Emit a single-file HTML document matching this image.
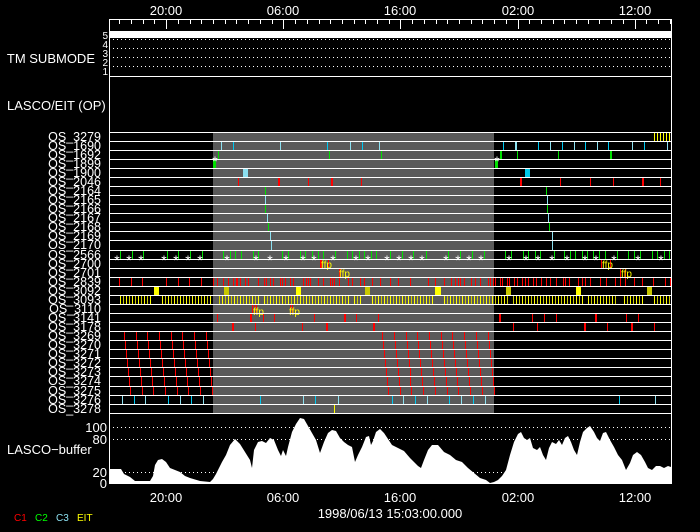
<!DOCTYPE html>
<html><head><meta charset="utf-8"><style>
html,body{margin:0;padding:0;background:#000;}
svg{display:block;}
text{font-family:"Liberation Sans",sans-serif;fill:#fff;}
text.y{fill:#ffff00;}
</style></head><body>
<svg width="700" height="532" viewBox="0 0 700 532" xmlns="http://www.w3.org/2000/svg">
<defs>
<pattern id="yp" x="0" y="0" width="6" height="10" patternUnits="userSpaceOnUse">
<rect x="0" y="0" width="1" height="10" fill="#ffff00"/><rect x="3" y="0" width="1" height="10" fill="#d0d000"/>
</pattern>
</defs>
<rect width="700" height="532" fill="#000"/>
<text x="166" y="15" font-size="13" text-anchor="middle">20:00</text>
<text x="283" y="15" font-size="13" text-anchor="middle">06:00</text>
<text x="400" y="15" font-size="13" text-anchor="middle">16:00</text>
<text x="518" y="15" font-size="13" text-anchor="middle">02:00</text>
<text x="635" y="15" font-size="13" text-anchor="middle">12:00</text>
<g stroke="#fff" stroke-width="1" shape-rendering="crispEdges">
<path d="M109 19.5H671.5"/>
<path d="M109.5 19V484M671.5 19V484"/>
<path d="M119.5 19v5M131.5 19v5M143.5 19v5M154.5 19v5M166.5 19v10M178.5 19v5M190.5 19v5M201.5 19v5M213.5 19v5M225.5 19v5M236.5 19v5M248.5 19v5M260.5 19v5M272.5 19v5M283.5 19v10M295.5 19v5M307.5 19v5M319.5 19v5M330.5 19v5M342.5 19v5M354.5 19v5M365.5 19v5M377.5 19v5M389.5 19v5M400.5 19v10M412.5 19v5M424.5 19v5M436.5 19v5M447.5 19v5M459.5 19v5M471.5 19v5M482.5 19v5M494.5 19v5M506.5 19v5M518.5 19v10M529.5 19v5M541.5 19v5M553.5 19v5M564.5 19v5M576.5 19v5M588.5 19v5M599.5 19v5M611.5 19v5M623.5 19v5M635.5 19v10M646.5 19v5M658.5 19v5M670.5 19v5"/>
</g>
<rect x="109" y="31" width="563" height="7" fill="#fff"/>
<g stroke="#fff" stroke-width="1" stroke-dasharray="1 3" shape-rendering="crispEdges">
<path d="M113 39.5H670M113 48.5H670M113 57.5H670M113 66.5H670"/>
</g>
<path d="M109 76.5H672" stroke="#fff" shape-rendering="crispEdges"/>
<text x="95" y="63" font-size="13" text-anchor="end">TM SUBMODE</text>
<g font-size="10" text-anchor="end">
<text x="108" y="39">5</text><text x="108" y="48">4</text><text x="108" y="57">3</text><text x="108" y="66">2</text><text x="108" y="75">1</text>
</g>
<text x="7" y="110" font-size="13">LASCO/EIT (OP)</text>
<rect x="213" y="132" width="281" height="281" fill="#5a5a5a"/>
<g shape-rendering="crispEdges" stroke-width="1" fill="none">
<path stroke="#ffff00" d="M654.5 133v8M657.5 133v8M660.5 133v8M663.5 133v8M666.5 133v8M669.5 133v8"/>
<path stroke="#8ce0f0" d="M221.5 142v8M280.5 142v8M350.5 142v8M379.5 142v8M515.5 142v8M516.5 142v8M550.5 142v8M574.5 142v8M597.5 142v8M632.5 142v8M667.5 142v8"/>
<path stroke="#00c8f0" d="M233.5 142v8M327.5 142v8M362.5 142v8M503.5 142v8M538.5 142v8M562.5 142v8M585.5 142v8M608.5 142v8M644.5 142v8"/>
<path stroke="#00e000" d="M218.5 151v8M329.5 151v8M381.5 151v8M500.5 151v8M501.5 151v8M517.5 151v8M558.5 151v8M610.5 151v8M611.5 151v8"/>
<path stroke="#ff0000" d="M238.5 178v8M278.5 178v8M279.5 178v8M308.5 178v8M331.5 178v8M332.5 178v8M361.5 178v8M520.5 178v8M521.5 178v8M560.5 178v8M590.5 178v8M613.5 178v8M642.5 178v8M643.5 178v8M660.5 178v8"/>
<path stroke="#00e000" d="M265.5 187v8M265.5 205v8M268.5 223v8M546.5 187v8M547.5 205v8M549.5 223v8"/>
<path stroke="#8ce0f0" d="M265.5 196v8M267.5 214v8M270.5 232v8M271.5 241v9M547.5 196v8M548.5 214v8M552.5 232v8M552.5 241v9"/>
<path stroke="#00e000" d="M120.5 251v8M132.5 251v8M143.5 251v8M167.5 251v8M178.5 251v8M190.5 251v8M202.5 251v8M223.5 251v8M230.5 251v8M235.5 251v8M241.5 251v8M253.5 251v8M258.5 251v8M282.5 251v8M288.5 251v8M300.5 251v8M305.5 251v8M312.5 251v8M318.5 251v8M323.5 251v8M335.5 251v8M347.5 251v8M352.5 251v8M359.5 251v8M364.5 251v8M371.5 251v8M376.5 251v8M390.5 251v8M402.5 251v8M413.5 251v8M426.5 251v8M448.5 251v8M460.5 251v8M472.5 251v8M484.5 251v8M505.5 251v8M511.5 251v8M523.5 251v8M528.5 251v8M535.5 251v8M540.5 251v8M554.5 251v8M564.5 251v8M570.5 251v8M575.5 251v8M582.5 251v8M587.5 251v8M593.5 251v8M599.5 251v8M605.5 251v8M617.5 251v8M628.5 251v8M634.5 251v8M640.5 251v8M652.5 251v8M657.5 251v8M664.5 251v8M669.5 251v8"/>
<path stroke="#ff0000" d="M320.5 260v8M321.5 260v8M328.5 260v8M339.5 269v8M340.5 269v8M601.5 260v8M610.5 260v8M620.5 269v8M625.5 269v8"/>
<path stroke="#ff0000" d="M119.5 278v8M131.5 278v8M142.5 278v8M166.5 278v8M178.5 278v8M189.5 278v8M201.5 278v8M213.5 278v8M217.5 278v8M223.5 278v8M228.5 278v8M233.5 278v8M236.5 278v8M237.5 278v8M240.5 278v8M245.5 278v8M248.5 278v8M258.5 278v8M264.5 278v8M266.5 278v8M270.5 278v8M273.5 278v8M280.5 278v8M282.5 278v8M285.5 278v8M290.5 278v8M293.5 278v8M303.5 278v8M306.5 278v8M308.5 278v8M310.5 278v8M318.5 278v8M323.5 278v8M330.5 278v8M332.5 278v8M334.5 278v8M339.5 278v8M348.5 278v8M352.5 278v8M360.5 278v8M364.5 278v8M372.5 278v8M380.5 278v8M390.5 278v8M398.5 278v8M410.5 278v8M428.5 278v8M435.5 278v8M444.5 278v8M451.5 278v8M455.5 278v8M458.5 278v8M460.5 278v8M464.5 278v8M471.5 278v8M475.5 278v8M480.5 278v8M488.5 278v8M490.5 278v8M493.5 278v8M495.5 278v8M500.5 278v8M502.5 278v8M507.5 278v8M509.5 278v8M514.5 278v8M517.5 278v8M522.5 278v8M525.5 278v8M528.5 278v8M533.5 278v8M536.5 278v8M541.5 278v8M546.5 278v8M550.5 278v8M556.5 278v8M563.5 278v8M565.5 278v8M569.5 278v8M578.5 278v8M582.5 278v8M585.5 278v8M590.5 278v8M600.5 278v8M606.5 278v8M615.5 278v8M620.5 278v8M625.5 278v8M634.5 278v8M642.5 278v8M653.5 278v8M665.5 278v8M670.5 278v8"/>
<path stroke="#ff0000" d="M252.5 305v8M254.5 305v8M256.5 305v8M290.5 305v8M292.5 305v8"/>
<path stroke="#ff0000" d="M217.5 314v8M250.5 314v8M251.5 314v8M263.5 314v8M274.5 314v8M314.5 314v8M344.5 314v8M345.5 314v8M356.5 314v8M378.5 314v8M499.5 314v8M500.5 314v8M532.5 314v8M544.5 314v8M556.5 314v8M595.5 314v8M596.5 314v8M626.5 314v8M638.5 314v8"/>
<path stroke="#ff0000" d="M232.5 323v8M233.5 323v8M255.5 323v8M302.5 323v8M326.5 323v8M327.5 323v8M373.5 323v8M374.5 323v8M513.5 323v8M537.5 323v8M584.5 323v8M585.5 323v8M607.5 323v8M631.5 323v8M632.5 323v8M654.5 323v8"/>
<path stroke="#ff0000" d="M124.5 332v8M136.5 332v8M147.5 332v8M159.5 332v8M171.5 332v8M182.5 332v8M194.5 332v8M206.5 332v8M382.5 332v8M394.5 332v8M406.5 332v8M417.5 332v8M429.5 332v8M441.5 332v8M452.5 332v8M464.5 332v8M476.5 332v8M488.5 332v8
M125.5 341v8M137.5 341v8M148.5 341v8M160.5 341v8M172.5 341v8M183.5 341v8M195.5 341v8M207.5 341v8M383.5 341v8M395.5 341v8M407.5 341v8M418.5 341v8M430.5 341v8M442.5 341v8M453.5 341v8M465.5 341v8M477.5 341v8M489.5 341v8
M126.5 350v8M138.5 350v8M149.5 350v8M161.5 350v8M173.5 350v8M184.5 350v8M196.5 350v8M208.5 350v8M384.5 350v8M396.5 350v8M408.5 350v8M419.5 350v8M431.5 350v8M443.5 350v8M454.5 350v8M466.5 350v8M478.5 350v8M490.5 350v8
M127.5 359v8M139.5 359v8M150.5 359v8M162.5 359v8M174.5 359v8M185.5 359v8M197.5 359v8M209.5 359v8M385.5 359v8M397.5 359v8M409.5 359v8M420.5 359v8M432.5 359v8M444.5 359v8M455.5 359v8M467.5 359v8M479.5 359v8M491.5 359v8
M128.5 368v8M140.5 368v8M151.5 368v8M163.5 368v8M175.5 368v8M186.5 368v8M198.5 368v8M210.5 368v8M386.5 368v8M398.5 368v8M410.5 368v8M421.5 368v8M433.5 368v8M445.5 368v8M456.5 368v8M468.5 368v8M480.5 368v8M492.5 368v8
M129.5 377v9M141.5 377v9M152.5 377v9M164.5 377v9M176.5 377v9M187.5 377v9M199.5 377v9M211.5 377v9M387.5 377v9M399.5 377v9M410.5 377v9M422.5 377v9M434.5 377v9M446.5 377v9M457.5 377v9M469.5 377v9M481.5 377v9M493.5 377v9
M130.5 387v8M142.5 387v8M153.5 387v8M165.5 387v8M177.5 387v8M188.5 387v8M200.5 387v8M212.5 387v8M388.5 387v8M400.5 387v8M411.5 387v8M423.5 387v8M435.5 387v8M447.5 387v8M458.5 387v8M470.5 387v8M482.5 387v8M494.5 387v8"/>
<path stroke="#00c8f0" d="M134.5 396v8M168.5 396v8M191.5 396v8M260.5 396v8M315.5 396v8M392.5 396v8M415.5 396v8M449.5 396v8M473.5 396v8M619.5 396v8"/>
<path stroke="#8ce0f0" d="M122.5 396v8M145.5 396v8M180.5 396v8M203.5 396v8M303.5 396v8M338.5 396v8M403.5 396v8M427.5 396v8M461.5 396v8M485.5 396v8M655.5 396v8"/>
<path stroke="#ffff00" d="M334.5 405v8"/>
</g>
<g shape-rendering="crispEdges">
<rect x="213" y="160" width="3" height="8" fill="#00e000"/>
<rect x="495" y="160" width="3" height="8" fill="#00e000"/>
<rect x="243" y="169" width="5" height="8" fill="#8ce0f0"/>
<rect x="525" y="169" width="5" height="8" fill="#00c8e8"/>
<rect x="154" y="287" width="5" height="8" fill="#ffff00"/>
<rect x="224" y="287" width="5" height="8" fill="#c8c800"/>
<rect x="296" y="287" width="5" height="8" fill="#ffff00"/>
<rect x="365" y="287" width="5" height="8" fill="#c8c800"/>
<rect x="435" y="287" width="6" height="8" fill="#ffff00"/>
<rect x="506" y="287" width="5" height="8" fill="#c8c800"/>
<rect x="576" y="287" width="5" height="8" fill="#ffff00"/>
<rect x="647" y="287" width="5" height="8" fill="#c8c800"/>
<g fill="url(#yp)">
<rect x="119" y="296" width="33" height="8"/><rect x="161" y="296" width="51" height="8"/>
<rect x="217" y="296" width="43" height="8"/><rect x="262" y="296" width="88" height="8"/>
<rect x="352" y="296" width="11" height="8"/><rect x="372" y="296" width="63" height="8"/>
<rect x="444" y="296" width="64" height="8"/><rect x="513" y="296" width="70" height="8"/>
<rect x="588" y="296" width="30" height="8"/><rect x="624" y="296" width="21" height="8"/>
<rect x="652" y="296" width="18" height="8"/>
</g>
</g>
<g font-size="14" text-anchor="middle">
<text x="117" y="265">*</text><text x="129" y="265">*</text><text x="141" y="265">*</text><text x="164" y="265">*</text><text x="176" y="265">*</text><text x="188" y="265">*</text><text x="200" y="265">*</text><text x="227" y="265">*</text><text x="256" y="265">*</text><text x="270" y="265">*</text><text x="286" y="265">*</text><text x="303" y="265">*</text><text x="314" y="265">*</text><text x="333" y="265">*</text>
<text x="356" y="265">*</text><text x="368" y="265">*</text><text x="387" y="265">*</text><text x="399" y="265">*</text><text x="411" y="265">*</text><text x="422" y="265">*</text><text x="446" y="265">*</text><text x="458" y="265">*</text><text x="469" y="265">*</text><text x="481" y="265">*</text><text x="509" y="265">*</text><text x="526" y="265">*</text><text x="538" y="265">*</text><text x="552" y="265">*</text><text x="567" y="265">*</text><text x="585" y="265">*</text><text x="596" y="265">*</text><text x="614" y="265">*</text><text x="638" y="265">*</text><text x="661" y="265">*</text>
<text x="215" y="166">*</text><text x="497" y="166">*</text>
</g>
<g font-size="10">
<text class="y" x="321" y="268">ffp</text><text class="y" x="339" y="277">ffp</text>
<text class="y" x="602" y="268">ffp</text><text class="y" x="621" y="277">ffp</text>
<text class="y" x="253" y="315">ffp</text><text class="y" x="289" y="315">ffp</text>
</g>
<path stroke="#fff" stroke-width="1" shape-rendering="crispEdges" d="M109 132.5H671M109 141.5H671M109 150.5H671M109 159.5H671M109 168.5H671M109 177.5H671M109 186.5H671M109 195.5H671M109 204.5H671M109 213.5H671M109 222.5H671M109 231.5H671M109 240.5H671M109 250.5H671M109 259.5H671M109 268.5H671M109 277.5H671M109 286.5H671M109 295.5H671M109 304.5H671M109 313.5H671M109 322.5H671M109 331.5H671M109 340.5H671M109 349.5H671M109 358.5H671M109 367.5H671M109 376.5H671M109 386.5H671M109 395.5H671M109 404.5H671M109 413.5H671"/>
<g font-size="12.5" text-anchor="end">
<text x="101" y="141">OS_3279</text><text x="101" y="150">OS_1690</text><text x="101" y="159">OS_1692</text><text x="101" y="168">OS_1899</text><text x="101" y="177">OS_1900</text><text x="101" y="186">OS_2046</text><text x="101" y="195">OS_2164</text><text x="101" y="204">OS_2165</text><text x="101" y="213">OS_2166</text><text x="101" y="222">OS_2167</text><text x="101" y="231">OS_2168</text><text x="101" y="240">OS_2169</text><text x="101" y="249">OS_2170</text><text x="101" y="259">OS_2566</text><text x="101" y="268">OS_2700</text><text x="101" y="277">OS_2701</text><text x="101" y="286">OS_2839</text><text x="101" y="295">OS_3092</text><text x="101" y="304">OS_3093</text><text x="101" y="313">OS_3110</text><text x="101" y="322">OS_3141</text><text x="101" y="331">OS_3178</text><text x="101" y="340">OS_3269</text><text x="101" y="349">OS_3270</text><text x="101" y="358">OS_3271</text><text x="101" y="367">OS_3272</text><text x="101" y="376">OS_3273</text><text x="101" y="385">OS_3274</text><text x="101" y="395">OS_3275</text><text x="101" y="404">OS_3276</text><text x="101" y="413">OS_3278</text>
</g>
<polygon fill="#fff" points="109,484 109,469 121,469 124,474 130,477 135,481 150,481 153,476 155,465 158,460 162,459 166,462 170,468 175,470 180,472 185,476 190,478 200,481 210,482 213,479 216,474 219,468 222,462 226,455 230,445 235,439 240,444 245,452 250,460 252,468 254,450 258,442 262,441 266,443 270,438 274,440 278,450 281,456 283,450 286,456 288,447 292,432 296,424 300,418 304,419 308,426 312,433 316,440 320,453 324,442 328,433 332,430 336,431 340,438 344,442 348,445 352,447 355,462 358,455 362,447 366,437 369,436 371,445 373,441 376,432 380,429 384,433 388,439 392,445 398,448 404,451 410,458 414,462 418,466 421,468 424,460 428,450 432,445 438,445 444,452 450,455 456,460 462,462 468,468 474,473 480,478 486,480 490,483 494,482 498,480 502,476 506,470 510,455 514,442 518,434 521,432 524,438 527,440 530,438 533,448 537,450 540,447 543,455 546,460 549,448 552,442 556,444 559,440 562,445 565,438 568,436 571,442 574,450 577,455 580,442 583,432 587,428 590,426 594,432 597,438 600,441 603,433 606,432 610,440 614,447 618,455 622,460 626,470 630,463 633,455 637,452 641,455 645,462 648,468 652,470 656,466 660,466 664,468 668,466 671,467 671,484"/>
<g stroke="#fff" stroke-width="1" stroke-dasharray="1 3" shape-rendering="crispEdges">
<path d="M113 427.5H670M113 439.5H670M113 472.5H670"/>
</g>
<g font-size="13" text-anchor="end">
<text x="107" y="432">100</text><text x="107" y="444">80</text><text x="107" y="477">20</text><text x="107" y="488">0</text>
</g>
<text x="7" y="454" font-size="13">LASCO−buffer</text>
<text x="166" y="502" font-size="13" text-anchor="middle">20:00</text>
<text x="283" y="502" font-size="13" text-anchor="middle">06:00</text>
<text x="400" y="502" font-size="13" text-anchor="middle">16:00</text>
<text x="518" y="502" font-size="13" text-anchor="middle">02:00</text>
<text x="635" y="502" font-size="13" text-anchor="middle">12:00</text>
<text x="390" y="518" font-size="13" text-anchor="middle">1998/06/13 15:03:00.000</text>
<g font-size="10">
<text x="14" y="521" style="fill:#ff0000">C1</text>
<text x="35" y="521" style="fill:#00ff00">C2</text>
<text x="56" y="521" style="fill:#8ce0f0">C3</text>
<text x="77" y="521" style="fill:#ffff00">EIT</text>
</g>
</svg>
</body></html>
